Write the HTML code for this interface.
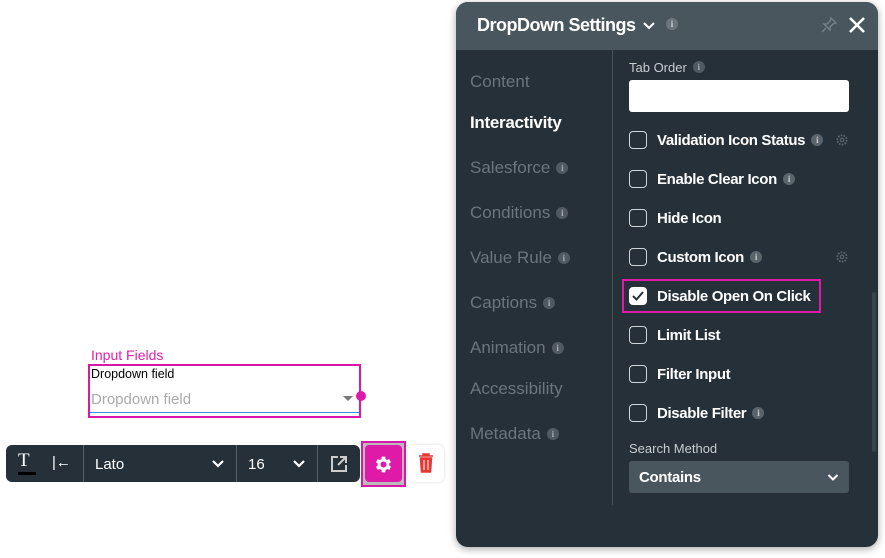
<!DOCTYPE html>
<html><head><style>
*{box-sizing:border-box;margin:0;padding:0}
body{width:885px;height:558px;background:#fff;position:relative;overflow:hidden;font-family:"Liberation Sans",sans-serif}
.a{position:absolute}
.panel{left:456px;top:2px;width:422px;height:545px;background:#263038;border-radius:12px;overflow:hidden;box-shadow:0 2px 8px rgba(0,0,0,.35)}
.hdr{left:0;top:0;width:422px;height:48px;background:#4a565e}
.nav{left:14px;color:#6b757b;font-size:17px;transform:translateY(-50%);white-space:nowrap}
.info{display:inline-block;width:12px;height:12px;border-radius:50%;background:#4f5a61;color:#aab;font-size:9px;text-align:center;line-height:12px;font-weight:bold;vertical-align:2px;margin-left:6px;font-family:"Liberation Serif",serif}
.row{left:173px;transform:translateY(-50%);display:flex;align-items:center;color:#fff;font-size:15px;font-weight:bold;white-space:nowrap;letter-spacing:-0.35px}
.cb{width:18px;height:18px;border:1.5px solid #d0d4d6;border-radius:4px;margin-right:10px}
.ri .info{background:#5a656b;color:#ccc}
</style></head><body>
<div class="a" style="left:91px;top:347px;color:#e020a8;font-size:14px">Input Fields</div>
<div class="a" style="left:88px;top:364px;width:273px;height:54px;border:2px solid #d818a8"></div>
<div class="a" style="left:91px;top:367px;font-size:12.5px;color:#000">Dropdown field</div>
<div class="a" style="left:91px;top:391px;font-size:15px;color:#aaa">Dropdown field</div>
<div class="a" style="left:90px;top:412px;width:269px;height:1px;background:#3b8fe0"></div>
<div class="a" style="left:343px;top:396px;border:5px solid transparent;border-top:5px solid #777;border-bottom:0"></div>
<div class="a" style="left:356px;top:391px;width:10px;height:10px;border-radius:50%;background:#e01aa8"></div>
<div class="a" style="left:6px;top:445px;width:354px;height:37px;background:#263038;border-radius:6px"></div>
<div class="a" style="left:18px;top:450px;color:#fff;font-size:19px;font-family:'Liberation Serif',serif">T</div>
<div class="a" style="left:18px;top:472px;width:18px;height:3px;background:#000"></div>
<div class="a" style="left:52px;top:454px;color:#fff;font-size:15px">|←</div>
<div class="a" style="left:83px;top:445px;width:1px;height:37px;background:#555f66"></div>
<div class="a" style="left:95px;top:456px;color:#fff;font-size:15px">Lato</div>
<svg class="a" style="left:211px;top:459px" width="14" height="10"><path d="M2 2l5 5 5-5" stroke="#fff" stroke-width="2.2" fill="none"/></svg>
<div class="a" style="left:236px;top:445px;width:1px;height:37px;background:#555f66"></div>
<div class="a" style="left:248px;top:456px;color:#fff;font-size:15px">16</div>
<svg class="a" style="left:292px;top:459px" width="14" height="10"><path d="M2 2l5 5 5-5" stroke="#fff" stroke-width="2.2" fill="none"/></svg>
<div class="a" style="left:317px;top:445px;width:1px;height:37px;background:#555f66"></div>
<svg class="a" style="left:330px;top:455px" width="18" height="18"><path d="M8 2H2v14h14v-6M10 2h6v6M16 2l-8 8" stroke="#ccc" stroke-width="2" fill="none"/></svg>
<div class="a" style="left:361px;top:441px;width:45px;height:46px;border:2px solid #d818a8;background:#bbb"></div>
<div class="a" style="left:365px;top:445px;width:37px;height:37px;background:#e01aa8;border-radius:4px"></div>
<svg class="a" style="left:373px;top:454px" width="21" height="21" viewBox="0 0 24 24"><path fill="#fff" d="M19.4 13a7.5 7.5 0 000-2l2.1-1.6-2-3.5-2.5 1a7 7 0 00-1.7-1L15 3h-4l-.4 2.9a7 7 0 00-1.7 1l-2.5-1-2 3.5L6.5 11a7.5 7.5 0 000 2l-2.1 1.6 2 3.5 2.5-1a7 7 0 001.7 1L11 21h4l.4-2.9a7 7 0 001.7-1l2.5 1 2-3.5zM13 15.5a3.5 3.5 0 110-7 3.5 3.5 0 010 7z" transform="translate(-1 0)"/></svg>
<div class="a" style="left:408px;top:445px;width:36px;height:37px;background:#fff;border-radius:6px;box-shadow:0 0 3px rgba(0,0,0,.15)"></div>
<svg class="a" style="left:418px;top:453px" width="16" height="20"><path d="M1 3h14M5 3V1h6v2M2.5 5h11l-1 14h-9z" stroke="#e53935" stroke-width="1.5" fill="#e53935"/><path d="M6 7v10M10 7v10" stroke="#fff" stroke-width="1"/></svg>
<div class="a panel">
 <div class="a hdr"></div>
 <div class="a" style="left:21px;top:13px;color:#fff;font-size:18px;font-weight:bold;letter-spacing:-.5px">DropDown Settings</div>
 <svg class="a" style="left:186px;top:19px" width="14" height="10"><path d="M2 2l5 5 5-5" stroke="#fff" stroke-width="2" fill="none"/></svg>
 <span class="a info" style="left:210px;top:16px;background:#6a757c;color:#ccc;margin:0">i</span>
 <svg class="a" style="left:364px;top:14px" width="18" height="18"><path d="M11 2l5 5-3 1-3 3 0 3-6-6 3 0 3-3zM6 12l-4 4" stroke="#77828a" stroke-width="1.3" fill="none"/></svg>
 <svg class="a" style="left:392px;top:14px" width="18" height="18"><path d="M2 2l14 14M16 2L2 16" stroke="#fff" stroke-width="2.6"/></svg>
 <div class="a" style="left:156px;top:48px;width:1px;height:455px;background:#46525a"></div>
 <div class="a" style="left:416px;top:290px;width:4px;height:160px;background:#39444b;border-radius:2px"></div>
 <div class="a nav" style="top:80px">Content</div>
 <div class="a nav" style="top:121px;color:#fff;font-weight:bold;letter-spacing:-.3px">Interactivity</div>
 <div class="a nav" style="top:166px">Salesforce<span class="info">i</span></div>
 <div class="a nav" style="top:211px">Conditions<span class="info">i</span></div>
 <div class="a nav" style="top:256px">Value Rule<span class="info">i</span></div>
 <div class="a nav" style="top:301px">Captions<span class="info">i</span></div>
 <div class="a nav" style="top:346px">Animation<span class="info">i</span></div>
 <div class="a nav" style="top:387px">Accessibility</div>
 <div class="a nav" style="top:432px">Metadata<span class="info">i</span></div>
 <div class="a" style="left:173px;top:58px;color:#c8cdd0;font-size:13px">Tab Order<span class="info">i</span></div>
 <div class="a" style="left:173px;top:78px;width:220px;height:32px;background:#fff;border-radius:3px"></div>
 <div class="a row ri" style="top:138px"><div class="cb"></div>Validation Icon Status<span class="info">i</span></div>
 <svg class="a" style="left:379px;top:131px" width="14" height="14" viewBox="0 0 24 24"><circle cx="12" cy="12" r="8" stroke="#5a656b" stroke-width="3" fill="none" stroke-dasharray="3 2"/><circle cx="12" cy="12" r="3" stroke="#5a656b" stroke-width="2" fill="none"/></svg>
 <div class="a row ri" style="top:177px"><div class="cb"></div>Enable Clear Icon<span class="info">i</span></div>
 <div class="a row" style="top:216px"><div class="cb"></div>Hide Icon</div>
 <div class="a row ri" style="top:255px"><div class="cb"></div>Custom Icon<span class="info">i</span></div>
 <svg class="a" style="left:379px;top:248px" width="14" height="14" viewBox="0 0 24 24"><circle cx="12" cy="12" r="8" stroke="#5a656b" stroke-width="3" fill="none" stroke-dasharray="3 2"/><circle cx="12" cy="12" r="3" stroke="#5a656b" stroke-width="2" fill="none"/></svg>
 <div class="a" style="left:166px;top:277px;width:199px;height:34px;border:2.5px solid #e01aa8"></div>
 <div class="a row" style="top:294px"><div class="cb" style="background:#fff;border-color:#fff;position:relative"><svg style="position:absolute;left:1px;top:2px" width="14" height="12"><path d="M2 6l3.5 3.5L12 2" stroke="#263038" stroke-width="2" fill="none"/></svg></div>Disable Open On Click</div>
 <div class="a row" style="top:333px"><div class="cb"></div>Limit List</div>
 <div class="a row" style="top:372px"><div class="cb"></div>Filter Input</div>
 <div class="a row ri" style="top:411px"><div class="cb"></div>Disable Filter<span class="info">i</span></div>
 <div class="a" style="left:173px;top:439px;color:#c8cdd0;font-size:13px">Search Method</div>
 <div class="a" style="left:173px;top:459px;width:220px;height:32px;background:#4a565e;border-radius:3px;color:#fff;font-size:15px;font-weight:bold;padding:8px 10px;letter-spacing:-.3px">Contains</div>
 <svg class="a" style="left:371px;top:471px" width="12" height="9"><path d="M1.5 2l4.5 4.5L10.5 2" stroke="#fff" stroke-width="2" fill="none"/></svg>
</div>
</body></html>
